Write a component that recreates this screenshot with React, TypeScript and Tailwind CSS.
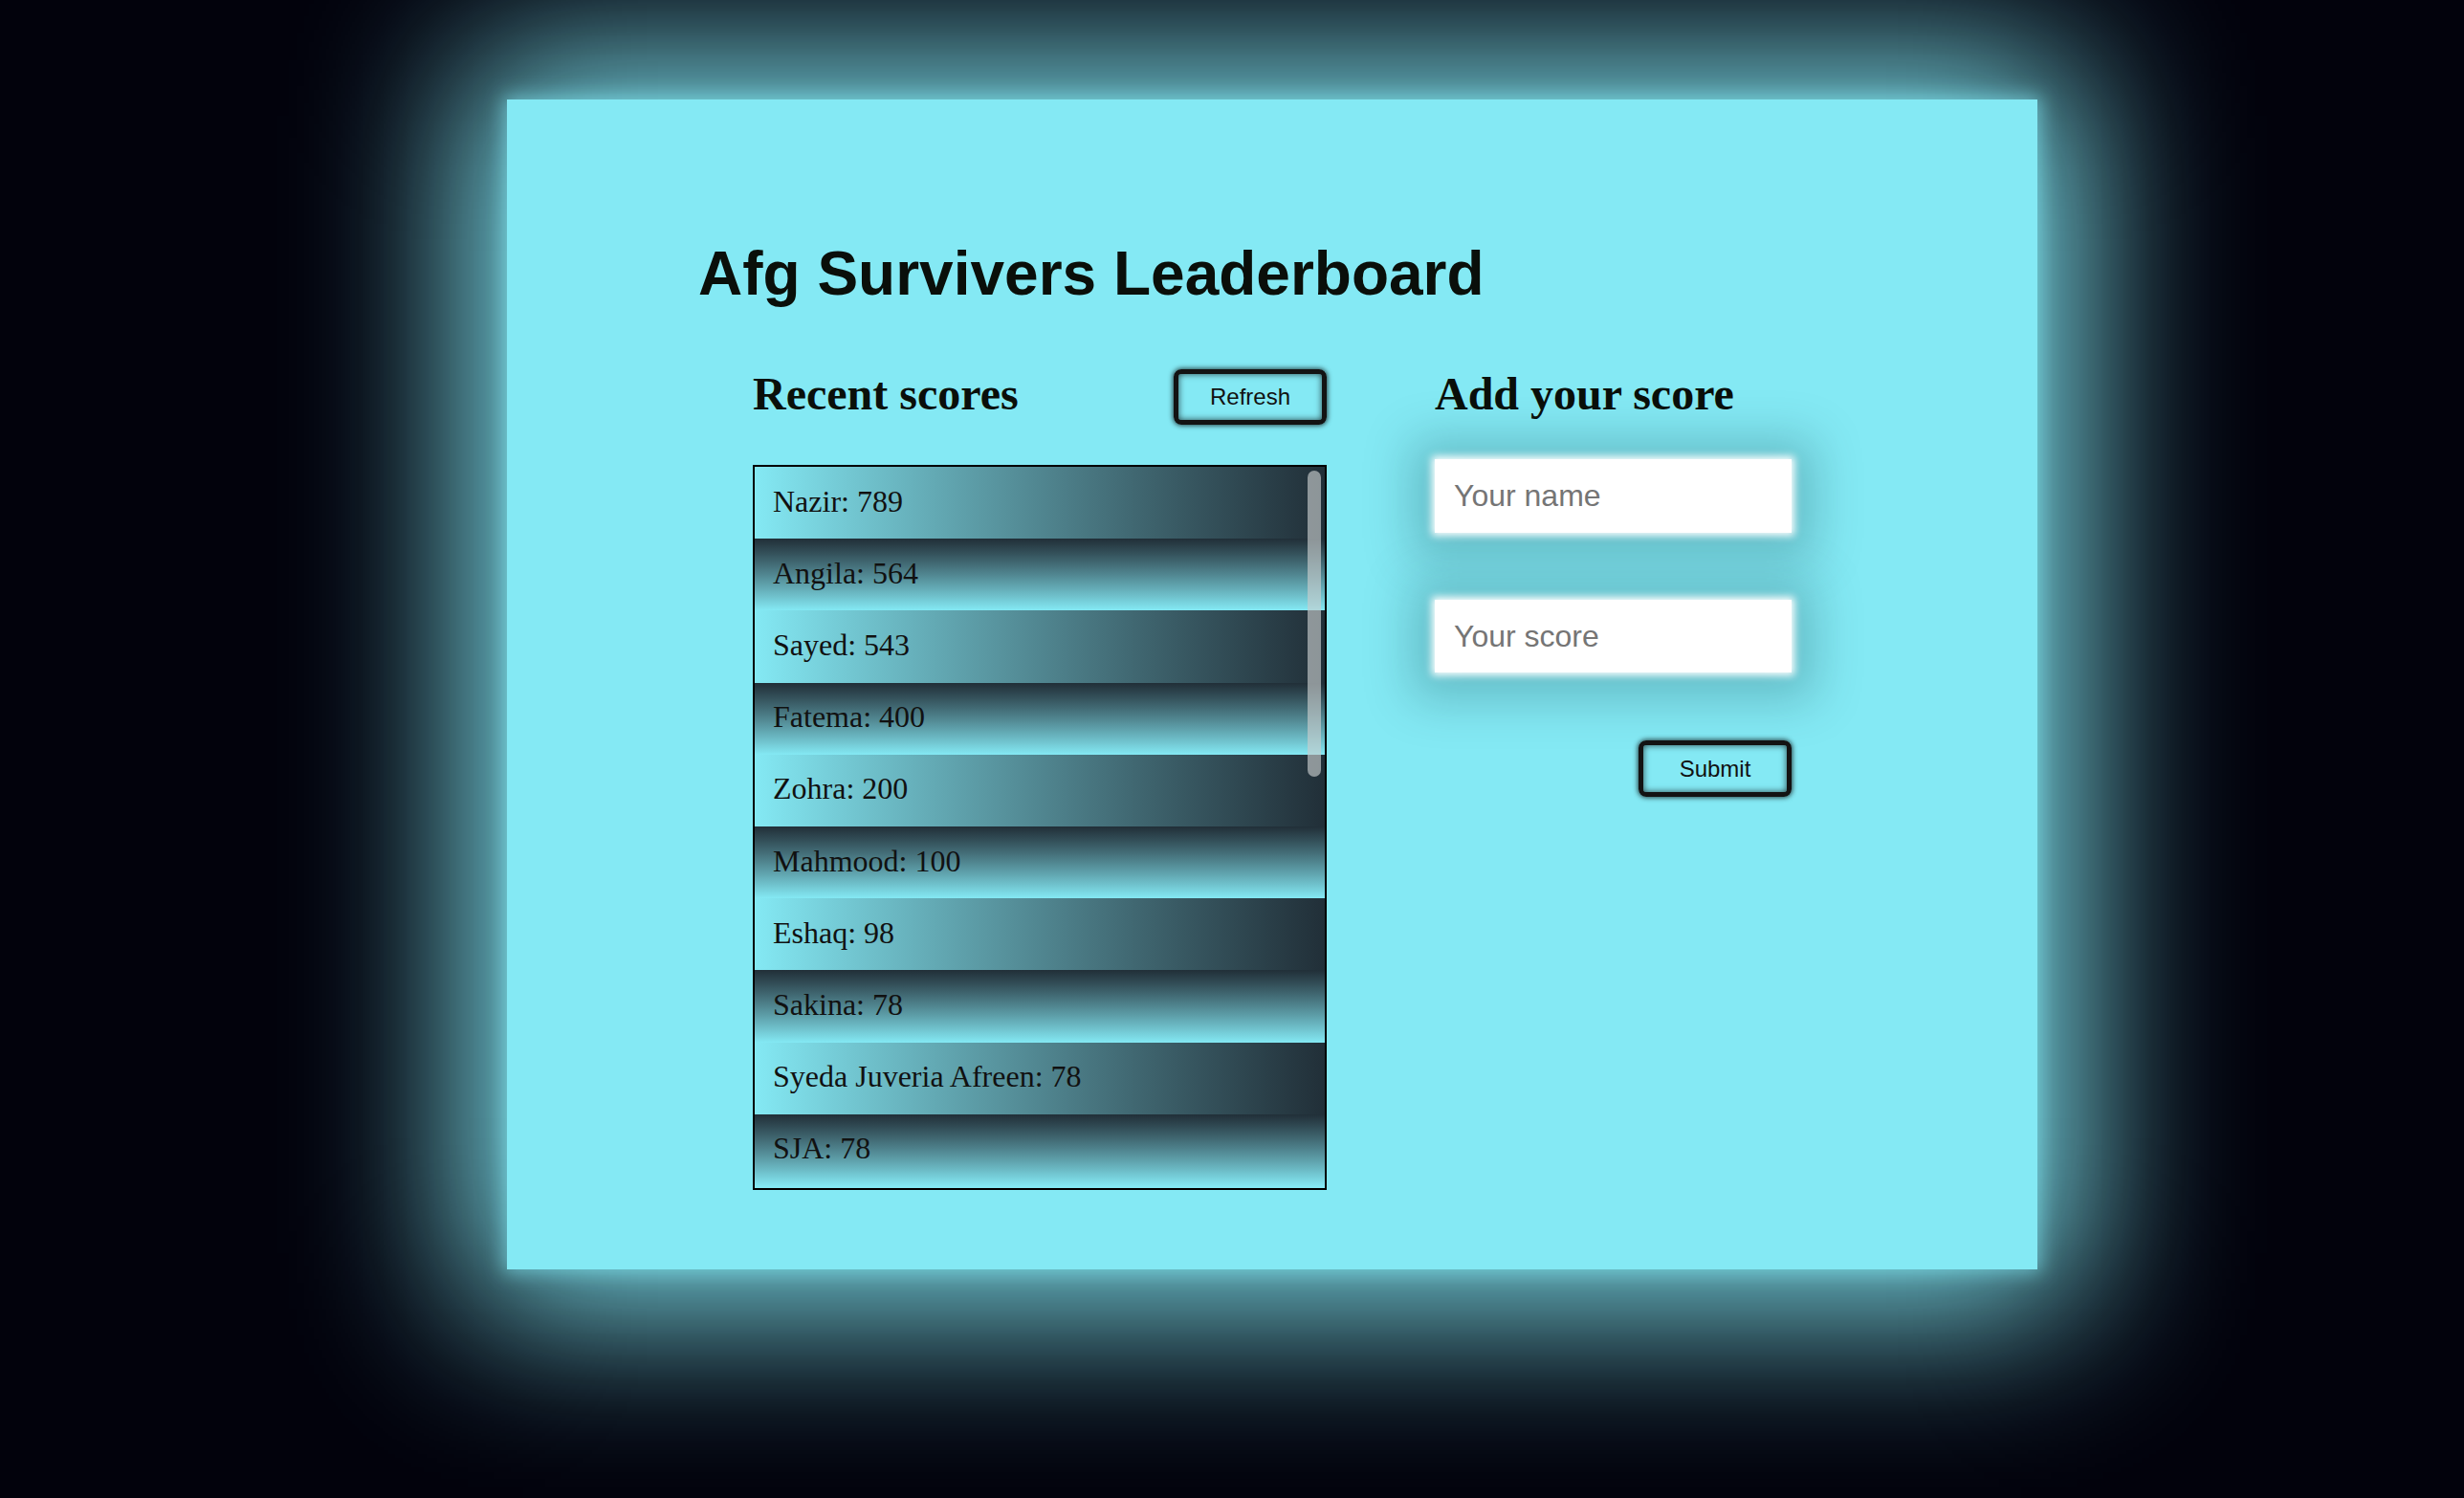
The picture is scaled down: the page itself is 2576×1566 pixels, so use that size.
import React from "react";

interface Score {
  user: string;
  score: number;
}

const scores: Score[] = [
  { user: "Nazir", score: 789 },
  { user: "Angila", score: 564 },
  { user: "Sayed", score: 543 },
  { user: "Fatema", score: 400 },
  { user: "Zohra", score: 200 },
  { user: "Mahmood", score: 100 },
  { user: "Eshaq", score: 98 },
  { user: "Sakina", score: 78 },
  { user: "Syeda Juveria Afreen", score: 78 },
  { user: "SJA", score: 78 },
];

const sans = "font-['Liberation_Sans',Arial,sans-serif]";
const serif = "font-['Liberation_Serif','Times_New_Roman',serif]";

const GlowButton = ({ label, className = "" }: { label: string; className?: string }) => (
  <button
    type="button"
    className={`w-[160px] h-[58px] flex items-center justify-center border-[5px] border-[#131313] rounded-[8px] bg-transparent text-[24px] leading-none text-[#111] shadow-[0_0_5px_1px_rgba(0,0,0,0.7),inset_0_0_7px_rgba(0,0,0,0.7)] ${sans} ${className}`}
  >
    {label}
  </button>
);

const App = () => {
  return (
    <div className="w-full h-[1566px] overflow-hidden bg-[#02020c] pt-[104px] pl-[530px]">
      <div className="w-[1600px] h-[1223px] bg-[#84e9f4] shadow-[0_0_18px_4px_rgba(132,233,244,0.55),0_0_164px_41px_#84e9f4] pt-[150px]">
        <h1 className={`pl-[200px] text-[64px] leading-none font-bold text-[#0a0f0a] ${sans}`}>
          Afg Survivers Leaderboard
        </h1>

        <div className="flex gap-[113px] pl-[257px] mt-[68px]">
          {/* Recent scores */}
          <section className="w-[600px] flex flex-col">
            <div className="h-[58px] flex justify-between items-start">
              <h2 className={`mt-[2px] text-[48px] leading-none font-bold text-[#0a0f0a] ${serif}`}>
                Recent scores
              </h2>
              <GlowButton label="Refresh" />
            </div>
            <div className="relative mt-[42px] h-[758px] border-2 border-black overflow-hidden">
              <ul className="flex flex-col">
                {scores.map((s, i) => (
                  <li
                    key={i}
                    className={`h-[75.2px] shrink-0 flex items-center px-[19px] pb-[4px] text-[32px] leading-none text-[#111] ${serif} ${
                      i % 2 === 0
                        ? "bg-gradient-to-r from-[#84e9f4] to-[#212f38]"
                        : "bg-gradient-to-b from-[#212f38] to-[#84e9f4]"
                    }`}
                  >
                    {s.user}: {s.score}
                  </li>
                ))}
              </ul>
              <div className="absolute top-[4px] right-[4px] w-[14px] h-[320px] rounded-full bg-[rgba(200,205,205,0.65)]" />
            </div>
          </section>

          {/* Add your score */}
          <section className="w-[373px] flex flex-col">
            <div className="h-[58px]">
              <h2 className={`mt-[2px] text-[48px] leading-none font-bold text-[#0a0f0a] ${serif}`}>
                Add your score
              </h2>
            </div>
            <form className="flex flex-col" onSubmit={(e) => e.preventDefault()}>
              <input
                type="text"
                placeholder="Your name"
                className={`mt-[36px] h-[77px] w-full bg-white px-[20px] text-[32px] text-[#111] placeholder:text-[#757575] outline-none shadow-[0_0_8px_3px_#ffffff,0_4px_50px_24px_rgba(10,60,70,0.26)] ${sans}`}
              />
              <input
                type="text"
                placeholder="Your score"
                className={`mt-[70px] h-[76px] w-full bg-white px-[20px] text-[32px] text-[#111] placeholder:text-[#757575] outline-none shadow-[0_0_8px_3px_#ffffff,0_4px_50px_24px_rgba(10,60,70,0.26)] ${sans}`}
              />
              <GlowButton label="Submit" className="self-end mt-[71px] h-[59px]" />
            </form>
          </section>
        </div>
      </div>
    </div>
  );
};

export default App;
